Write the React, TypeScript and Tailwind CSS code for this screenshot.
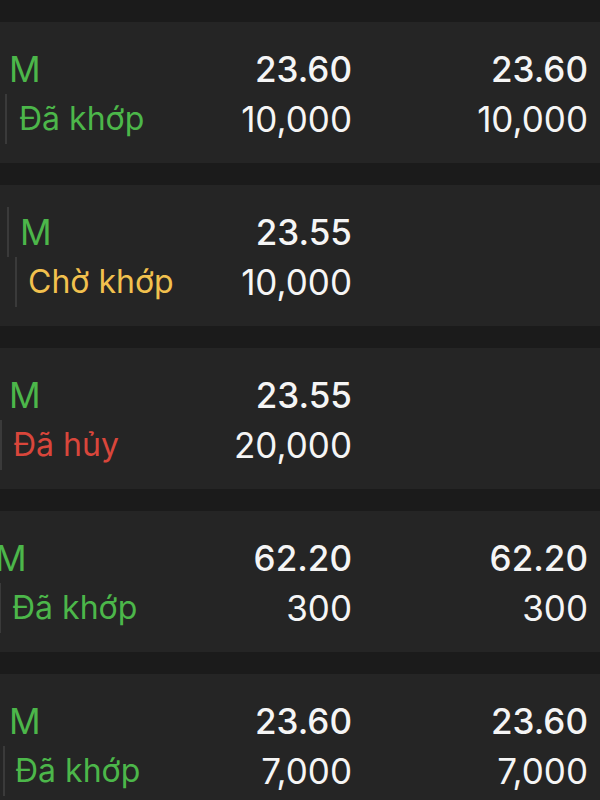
type Order = {
  mPad: string;
  statusWrap: string;
  status: string;
  statusColor: string;
  price: string;
  qty: string;
  matchedPrice?: string;
  matchedQty?: string;
};

const orders: Order[] = [
  {
    mPad: "pl-[9px]",
    statusWrap: "ml-[5px] border-l-2 border-[#3a3a3a] pl-[12px]",
    status: "Đã khớp",
    statusColor: "text-[#4cb74a]",
    price: "23.60",
    qty: "10,000",
    matchedPrice: "23.60",
    matchedQty: "10,000",
  },
  {
    mPad: "ml-[7px] border-l-2 border-[#3a3a3a] pl-[11px]",
    statusWrap: "ml-[15px] border-l-2 border-[#3a3a3a] pl-[11px]",
    status: "Chờ khớp",
    statusColor: "text-[#f2c14e]",
    price: "23.55",
    qty: "10,000",
  },
  {
    mPad: "pl-[9px]",
    statusWrap: "ml-0 border-l-2 border-[#3a3a3a] pl-[11px]",
    status: "Đã hủy",
    statusColor: "text-[#d9463b]",
    price: "23.55",
    qty: "20,000",
  },
  {
    mPad: "ml-[-5px]",
    statusWrap: "ml-[-1px] border-l-2 border-[#3a3a3a] pl-[11px]",
    status: "Đã khớp",
    statusColor: "text-[#4cb74a]",
    price: "62.20",
    qty: "300",
    matchedPrice: "62.20",
    matchedQty: "300",
  },
  {
    mPad: "pl-[9px]",
    statusWrap: "ml-[3px] border-l-2 border-[#3a3a3a] pl-[10px]",
    status: "Đã khớp",
    statusColor: "text-[#4cb74a]",
    price: "23.60",
    qty: "7,000",
    matchedPrice: "23.60",
    matchedQty: "7,000",
  },
];

function OrderCard({ o }: { o: Order }) {
  return (
    <div className="flex h-[141px] shrink-0 bg-[#252525] pt-[22px] pr-[12px] text-[35px] leading-[50px]">
      <div className="flex w-[200px] flex-col">
        <div className={`w-fit text-[#4cb74a] ${o.mPad}`}>M</div>
        <div className={`w-fit text-[32px] ${o.statusWrap} ${o.statusColor}`}>{o.status}</div>
      </div>
      <div className="flex w-[152px] flex-col items-end text-[#f5f5f5]">
        <div className="font-medium">{o.price}</div>
        <div>{o.qty}</div>
      </div>
      <div className="flex w-[236px] flex-col items-end text-[#f5f5f5]">
        <div className="font-medium">{o.matchedPrice ?? ""}</div>
        <div>{o.matchedQty ?? ""}</div>
      </div>
    </div>
  );
}

export default function App() {
  return (
    <div
      className="flex h-[800px] w-[600px] flex-col gap-[22px] overflow-hidden bg-[#1b1b1b] pt-[22px]"
      style={{ fontFamily: "Inter, 'Noto Sans', sans-serif" }}
    >
      {orders.map((o, i) => (
        <OrderCard key={i} o={o} />
      ))}
    </div>
  );
}
